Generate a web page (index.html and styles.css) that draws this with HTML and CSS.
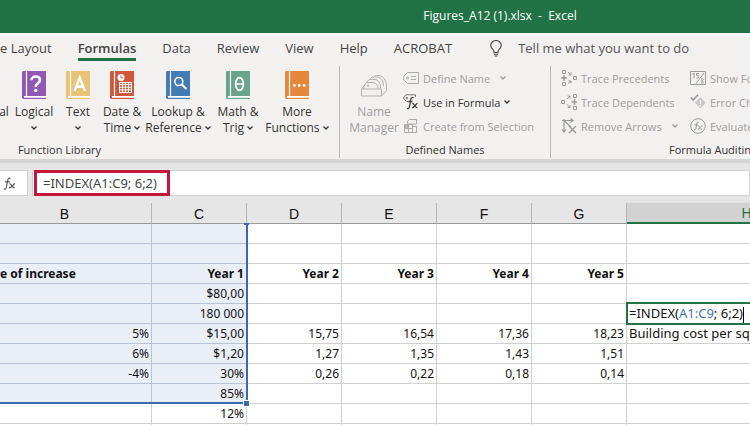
FILE: index.html
```html
<!DOCTYPE html>
<html lang="en">
<head>
  <meta charset="UTF-8" />
  <meta name="viewport" content="width=device-width, initial-scale=1.0" />
  <title>Figures_A12 (1).xlsx - Excel</title>
  <link rel="stylesheet" href="styles.css">
</head>
<body>
  <svg class="defs" aria-hidden="true">
    <symbol id="chevron" viewBox="0 0 6 4"><path d="M0.5 0.5 L3 3 L5.5 0.5" fill="none" stroke="currentColor" stroke-width="1.3"/></symbol>
    <symbol id="book" viewBox="0 0 24 28">
      <path d="M1 0 H24 V28 H1.5 Q0 28 0 26 V1.5 Q0 0 1 0 Z"/>
      <path d="M4.5 0 V25" stroke="#fff" stroke-width="1.2"/>
      <path d="M2 25.9 H24" stroke="#fff" stroke-width="1.8"/>
    </symbol>
  </svg>

  <header class="titlebar">Figures_A12 (1).xlsx &nbsp;- &nbsp;Excel</header>

  <nav class="tabs">
    <a href="#">e Layout</a>
    <a href="#" class="active">Formulas</a>
    <a href="#">Data</a>
    <a href="#">Review</a>
    <a href="#">View</a>
    <a href="#">Help</a>
    <a href="#">ACROBAT</a>
    <button class="tellme">
      <svg width="12" height="17" viewBox="0 0 12 17" fill="none" stroke="#444" stroke-width="1.1"><path d="M4 12.5 V11.5 C4 9.5 0.7 8.7 0.7 5.6 A5.3 5.1 0 0 1 11.3 5.6 C11.3 8.7 8 9.5 8 11.5 V12.5 Z M4 14.3 H8 M4.7 16 H7.3"/></svg>
      Tell me what you want to do
    </button>
  </nav>

  <div class="ribbon">
    <section class="group library">
      <div class="tools">
        <button class="big first"><span class="blank"></span>al</button>
        <button class="big logical">
          <svg class="book" viewBox="0 0 24 28"><use href="#book"/><path d="M9.5 9.2 C9.5 4.2 18 4.4 18 9 C18 12.4 13.8 12.3 13.8 16" fill="none" stroke="#fff" stroke-width="2.6"/><circle cx="13.8" cy="19.4" r="1.7" fill="#fff"/></svg>
          Logical<svg class="chev"><use href="#chevron"/></svg>
        </button>
        <button class="big text">
          <svg class="book" viewBox="0 0 24 28"><use href="#book"/><path d="M8.6 20 L13.7 6.5 L18.9 20 M10.4 15.7 H17" fill="none" stroke="#fff" stroke-width="2.4"/></svg>
          Text<svg class="chev"><use href="#chevron"/></svg>
        </button>
        <button class="big date">
          <svg class="book" viewBox="0 0 24 28"><use href="#book"/><circle cx="11" cy="6.5" r="3.5" fill="#fff"/><path d="M11 4.4 V6.8 H13" fill="none" stroke="#d0573c"/><path d="M9.5 11.5 H21.5 V21.5 H9.5 Z M9.5 13.5 H21.5 M9.5 16.2 H21.5 M9.5 18.9 H21.5 M12.5 11.5 V21.5 M15.5 11.5 V21.5 M18.5 11.5 V21.5" fill="none" stroke="#fff"/></svg>
          Date &amp;<span>Time <svg class="chev"><use href="#chevron"/></svg></span>
        </button>
        <button class="big lookup">
          <svg class="book" viewBox="0 0 24 28"><use href="#book"/><circle cx="12.8" cy="10.5" r="4" fill="none" stroke="#fff" stroke-width="1.6"/><path d="M15.8 13.5 L20.5 18" stroke="#fff" stroke-width="2.2"/></svg>
          Lookup &amp;<span>Reference <svg class="chev"><use href="#chevron"/></svg></span>
        </button>
        <button class="big math">
          <svg class="book" viewBox="0 0 24 28"><use href="#book"/><ellipse cx="13.5" cy="13" rx="3.9" ry="6.3" fill="none" stroke="#fff" stroke-width="1.7"/><path d="M9.6 13 H17.4" stroke="#fff" stroke-width="1.5"/></svg>
          Math &amp;<span>Trig <svg class="chev"><use href="#chevron"/></svg></span>
        </button>
        <button class="big more">
          <svg class="book" viewBox="0 0 24 28"><use href="#book"/><g fill="#fff"><circle cx="9.3" cy="14.5" r="1.4"/><circle cx="14.2" cy="14.5" r="1.4"/><circle cx="19.1" cy="14.5" r="1.4"/></g></svg>
          More<span>Functions <svg class="chev"><use href="#chevron"/></svg></span>
        </button>
      </div>
      <h2>Function Library</h2>
    </section>

    <section class="group names">
      <div class="tools">
        <button class="big manager" disabled>
          <svg class="book" viewBox="0 0 28 28" fill="none" stroke="#b3b1b3"><path d="M1.5 18 H21.5 V25 H1.5 Z"/><path d="M21.5 25 L26.5 19.5 V14 M1.5 18 L5 14"/><path d="M4 18 V14.5 L6.5 11.5 H13 C15.5 11.5 18 14 18 18"/><path d="M7 11 L9 8.5 H15 C18 8.5 20.5 12 20.5 17"/><path d="M10 8 L12 6 H17.5 C20.5 6 23.5 10 23.5 15"/><path d="M14 5.5 Q15 4.5 19 4.5 C23 5 26 9 26.5 14"/><circle cx="8" cy="14.5" r="0.8"/></svg>
          Name<span>Manager</span>
        </button>
        <div class="list">
          <button class="row" disabled>
            <svg class="ico" viewBox="0 0 16 16" fill="none" stroke="#aaa"><path d="M4.5 2.5 H15.5 V13.5 H4.5 L0.8 10 V6 Z M8 6.5 H13 M8 9.5 H13"/><circle cx="4.5" cy="8" r="1"/></svg>
            Define Name <svg class="chev apart"><use href="#chevron"/></svg>
          </button>
          <button class="row">
            <svg class="ico" viewBox="0 0 16 16" fill="none" stroke="#444"><path d="M5 7.5 H3.5 L0.8 5 V3 L3 0.8 H12.5 V3" stroke="#777"/><circle cx="3.8" cy="4" r="0.8" stroke="#777"/><path d="M10.5 4 C8.8 2.5 8 4 7.7 6 L6.5 12.5 C6.2 14.6 5 15 4 14.4 M5.2 7.5 H9.5" stroke-width="1.3"/><path d="M9.3 9.5 C11.5 9 12 14.5 14.5 13.5 M14.6 9.3 C12.8 9.3 11.5 14 9 13.7" stroke-width="1.3"/></svg>
            Use in Formula <svg class="chev"><use href="#chevron"/></svg>
          </button>
          <button class="row" disabled>
            <svg class="ico" viewBox="0 0 16 16" fill="none" stroke="#aaa"><path d="M4.5 5.5 V3 L6.5 1.5 H13.5 V6 H4.5 M1.5 6.5 H9.5 V14.5 H1.5 Z M1.5 10.5 H9.5 M5.5 6.5 V14.5 M9.5 8.5 H13.5 V14.5 H9.5"/><path d="M2 7 H5 V10 H2 Z" fill="#c4c2c4"/></svg>
            Create from Selection
          </button>
        </div>
      </div>
      <h2>Defined Names</h2>
    </section>

    <section class="group auditing">
      <div class="tools">
        <div class="list">
          <button class="row" disabled>
            <svg class="ico" viewBox="0 0 16 16" fill="none" stroke="#999"><path d="M1.5 0.5 H4.5 V3.5 H1.5 Z M1.5 12.5 H4.5 V15.5 H1.5 Z M12.5 6.5 H15.5 V9.5 H12.5 Z"/><path d="M0 8 H6 M3 5.2 V10.8" stroke-width="1.6"/><path d="M7 2 L10 5 M10 2.5 V5 H7.5 M7 13.5 L10 11 M7.5 11 H10 V13.5"/></svg>
            Trace Precedents
          </button>
          <button class="row" disabled>
            <svg class="ico" viewBox="0 0 16 16" fill="none" stroke="#999"><path d="M12.5 0.5 H15.5 V3.5 H12.5 Z M12.5 12.5 H15.5 V15.5 H12.5 Z M0.5 6.5 H3.5 V9.5 H0.5 Z"/><path d="M10.5 8 H16 M13.5 5.2 V10.8" stroke-width="1.6"/><path d="M6 5 L9 2 M6.5 2 H9 V4.5 M6 10.5 L9 13.5 M9 11 V13.5 H6.5"/></svg>
            Trace Dependents
          </button>
          <button class="row" disabled>
            <svg class="ico" viewBox="0 0 16 16" fill="none" stroke="#999" stroke-width="1.2"><path d="M3 1 V14 M1 11.5 L3 14 L5 11.5 M1 2.5 H12 M9.5 0.5 L12 2.5 L9.5 4.5 M3 2.5 L10 9"/><path d="M8 8 L15 15 M15 8 L8 15" stroke-width="1.4"/></svg>
            Remove Arrows <svg class="chev apart"><use href="#chevron"/></svg>
          </button>
        </div>
        <div class="list">
          <button class="row" disabled>
            <svg class="ico" viewBox="0 0 16 16" fill="none" stroke="#999"><path d="M0.5 1.5 H15.5 V14.5 H0.5 Z"/><path d="M2.5 4 L4 3 V8.5 M9 3.5 H6.5 V5.5 C9.5 5 9.5 8.5 6.5 8.3 M14 3 L6 13.5 M11 9 C14 8 14 10.5 11.5 11 C14.5 11.5 13.5 13.5 11 13"/></svg>
            Show Formulas
          </button>
          <button class="row" disabled>
            <svg class="ico" viewBox="0 0 16 16" fill="none"><path d="M10.5 3 L15.8 8.7 L10.5 14.5 L5 8.7 Z" fill="#c8c6c8"/><path d="M10.5 6 V10 M10.5 11 V12.5" stroke="#fff" stroke-width="1.3"/><path d="M0.8 3.5 L3.3 6 L8 0.8" stroke="#999" stroke-width="1.7"/></svg>
            Error Checking
          </button>
          <button class="row" disabled>
            <svg class="ico" viewBox="0 0 16 16" fill="none" stroke="#999"><circle cx="8" cy="8" r="7.3"/><path d="M8.8 4.3 C7.5 3.3 7 4.5 6.7 6 L5.8 10.5 C5.5 12 4.8 12 4 11.6 M4.5 6.8 H8 M8 8 C10 7.5 10 12 12 11 M12.3 7.8 C10.5 8 10 11 7.8 11.3"/></svg>
            Evaluate Formula
          </button>
        </div>
      </div>
      <h2>Formula Auditing</h2>
    </section>
  </div>

  <div class="formulabar">
    <button class="fx" aria-label="Insert function">
      <svg width="13" height="13" viewBox="0 0 13 13" fill="none" stroke="#555" stroke-width="1.2"><path d="M7.5 1.4 C5.5 0.2 5 2 4.6 4 L3.4 10 C3 12.3 2 12.4 0.8 11.9 M2 4.8 H6.8"/><path d="M6.3 6.8 C8.8 6 9 11.8 11.8 10.6 M12 6.7 C10 6.7 8.8 11 6 10.8"/></svg>
    </button>
    <div class="entry">
      <input class="formula" type="text" aria-label="Formula" value="=INDEX(A1:C9; 6;2)">
    </div>
  </div>

  <main class="sheet">
    <table>
      <colgroup><col class="col-b"><col span="5" class="col-n"><col class="col-h"></colgroup>
      <thead>
        <tr><th>B</th><th>C</th><th>D</th><th>E</th><th>F</th><th>G</th><th class="current">H</th></tr>
      </thead>
      <tbody>
        <tr><td></td><td></td><td></td><td></td><td></td><td></td><td></td></tr>
        <tr><td></td><td></td><td></td><td></td><td></td><td></td><td></td></tr>
        <tr class="years"><td class="label">e of increase</td><td>Year 1</td><td>Year 2</td><td>Year 3</td><td>Year 4</td><td>Year 5</td><td></td></tr>
        <tr><td></td><td>$80,00</td><td></td><td></td><td></td><td></td><td></td></tr>
        <tr><td></td><td>180 000</td><td></td><td></td><td></td><td></td><td class="note editing"><div class="editor">=INDEX(<span class="ref">A1:C9</span>; 6;2)<span class="caret"></span></div></td></tr>
        <tr><td>5%</td><td>$15,00</td><td>15,75</td><td>16,54</td><td>17,36</td><td>18,23</td><td class="note">Building cost per sq</td></tr>
        <tr><td>6%</td><td>$1,20</td><td>1,27</td><td>1,35</td><td>1,43</td><td>1,51</td><td></td></tr>
        <tr><td>-4%</td><td>30%</td><td>0,26</td><td>0,22</td><td>0,18</td><td>0,14</td><td></td></tr>
        <tr><td></td><td class="corner">85%<span class="handle"></span></td><td></td><td></td><td></td><td></td><td></td></tr>
        <tr class="outside"><td></td><td>12%</td><td></td><td></td><td></td><td></td><td></td></tr>
        <tr class="outside"><td></td><td></td><td></td><td></td><td></td><td></td><td></td></tr>
      </tbody>
    </table>
    <div class="range"></div>
  </main>
</body>
</html>
```
FILE: styles.css
```css
* {
  box-sizing: border-box;
}
body {
  margin: 0;
  height: 100vh;
  overflow: hidden;
  background: #fff;
  font-family: "Open Sans", "Noto Sans", sans-serif;
  font-size: 12px;
  color: #333;
}
button {
  padding: 0;
  border: none;
  background: none;
  font: inherit;
  color: inherit;
  cursor: pointer;
}
.defs {
  display: none;
}
.titlebar {
  height: 33px;
  padding-left: 250px;
  line-height: 32px;
  background: #217346;
  color: #fff;
  text-align: center;
}

/* tabs */
.tabs {
  display: flex;
  align-items: flex-start;
  gap: 26px;
  height: 33px;
  padding-top: 2px;
  border-top: 3px solid #fbf7f7;
  background: #f2f1f0;
  font-size: 13px;
  line-height: 20px;
  white-space: nowrap;
}
.tabs a {
  color: #444;
  text-decoration: none;
}
.tabs .active {
  border-bottom: 3px solid #217346;
  font-weight: 600;
}
.tellme {
  display: flex;
  align-items: center;
  gap: 16px;
  margin-left: 12px;
  color: #555;
}

/* ribbon */
.ribbon {
  display: flex;
  height: 93px;
  background: #f2f1f0;
}
.group {
  display: flex;
  flex-direction: column;
  justify-content: space-between;
  flex-shrink: 0;
  margin-bottom: 1px;
  border-right: 1px solid #b8b8b8;
}
.group h2 {
  margin: 0;
  font-size: 11px;
  font-weight: 500;
  line-height: 16px;
  text-align: center;
}
.tools {
  display: flex;
}
.library {
  width: 560px;
  margin-left: -220px;
}
.library .tools {
  justify-content: flex-end;
  padding-right: 9px;
}
.names {
  width: 211px;
}
.auditing {
  flex: 1 0 325px;
}
.big {
  display: flex;
  flex-direction: column;
  align-items: center;
  width: 44px;
  padding-top: 5px;
  line-height: 16px;
  white-space: nowrap;
}
.big .chev {
  margin-top: 6px;
}
.big span .chev {
  margin: 0 0 2px;
}
.book {
  width: 24px;
  height: 28px;
  margin-bottom: 5px;
}
.blank {
  height: 33px;
}
.chev {
  width: 6px;
  height: 4px;
}
.first {
  width: 16px;
}
.logical .book { fill: #9159b5; }
.text .book { fill: #e9c477; }
.date .book { fill: #d0573c; }
.lookup .book { fill: #437bb5; }
.math .book { fill: #69a58b; }
.more .book { fill: #e6873c; }
.lookup {
  width: 68px;
}
.math {
  width: 52px;
}
.more {
  width: 66px;
}
.manager {
  width: 50px;
  margin-left: 9px;
}
.manager .book {
  width: 28px;
}
.list {
  display: flex;
  flex-direction: column;
  padding-left: 4px;
}
.row {
  display: flex;
  align-items: center;
  gap: 4px;
  height: 24px;
  font-size: 11px;
  white-space: nowrap;
}
.row .apart {
  margin-left: 6px;
}
.ico {
  width: 16px;
  height: 16px;
}
.auditing .list {
  width: 129px;
  padding-left: 10px;
}
.row:disabled,
.big:disabled {
  color: #a09ea0;
}

/* formula bar */
.formulabar {
  display: flex;
  gap: 4px;
  height: 44px;
  padding-top: 7px;
  border-top: 4px solid #d4d4d4;
  background: #e6e6e6;
}
.fx {
  display: flex;
  align-items: center;
  width: 28px;
  height: 26px;
  padding-left: 3px;
  border: 1px solid #d0d0d0;
  border-left: none;
  background: #fff;
}
.entry {
  flex: 1;
  height: 26px;
  padding-left: 1px;
  border: 1px solid #d0d0d0;
  background: #fff;
}
.formula {
  display: block;
  width: 136px;
  height: 26px;
  margin-top: -1px;
  padding: 0 6px;
  border: 3px solid #c4173c;
  background: #fff;
  font: 13px "Noto Sans", sans-serif;
  color: #444;
  outline: none;
}

/* sheet */
.sheet {
  position: relative;
}
table {
  width: 889px;
  margin-left: -22px;
  border-collapse: separate;
  border-spacing: 0;
  table-layout: fixed;
  font-family: "Noto Sans", sans-serif;
  font-size: 12px;
  color: #111;
}
.col-b {
  width: 174px;
}
.col-n {
  width: 95px;
}
.col-h {
  width: 240px;
}
th {
  height: 20px;
  padding: 2px 0 0;
  border-right: 1px solid #b5b5b5;
  border-bottom: 1px solid #999;
  background: #e6e6e6;
  font: 14px/17px "Liberation Sans", sans-serif;
}
th.current {
  border-bottom: 2px solid #217346;
  background: #d2d2d2;
  color: #217346;
}
td {
  height: 20px;
  padding: 0 2px;
  border-right: 1px solid #d0d0d0;
  border-bottom: 1px solid #d0d0d0;
  line-height: 19px;
  text-align: right;
  white-space: nowrap;
}
td:nth-child(-n+2) {
  border-color: #b9c3d6;
  background: #e9eef7;
}
.outside td:nth-child(-n+2) {
  border-color: #d0d0d0;
  background: #fff;
}
.years td {
  font-weight: bold;
}
td.label {
  padding-left: 22px;
  text-align: left;
}
td.note {
  font-size: 13px;
  text-align: left;
}
.editing,
.corner {
  position: relative;
}
.editor {
  position: absolute;
  inset: -2px 0 -2px -1px;
  padding-left: 1px;
  border: 2px solid #217346;
  background: #fff;
}
.ref {
  color: #4472c4;
}
.caret {
  display: inline-block;
  width: 1px;
  height: 16px;
  background: #000;
  vertical-align: middle;
}
.range {
  position: absolute;
  top: 20px;
  left: 0;
  width: 248px;
  height: 181px;
  border-right: 2px solid #3c68b1;
  border-bottom: 2px solid #3c68b1;
}
/* top edge mark of the range */
.range::before {
  content: "";
  position: absolute;
  top: 0;
  right: -3px;
  width: 5px;
  height: 2px;
  background: #3c68b1;
}
.handle {
  position: absolute;
  right: -4px;
  bottom: -4px;
  z-index: 1;
  width: 7px;
  height: 7px;
  border: 1px solid #fff;
  background: #3c68b1;
}
```
